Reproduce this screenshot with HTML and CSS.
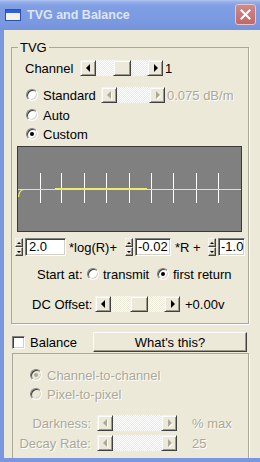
FILE: index.html
```html
<!DOCTYPE html>
<html>
<head>
<meta charset="utf-8">
<link rel="stylesheet" href="styles.css">
</head>
<body>
<div class="window">
  <div class="titlebar">
    <svg class="app-icon" width="16" height="12" viewBox="0 0 16 12">
      <rect x="0.5" y="0.5" width="15" height="11" fill="#F4F2E8" stroke="#2A50B0"/>
      <rect x="1" y="1" width="14" height="3" fill="#2F62D8"/>
    </svg>
    <span class="title">TVG and Balance</span>
    <span class="close">
      <svg width="11" height="11" viewBox="0 0 11 11"><path d="M1.5 1.5 L9.5 9.5 M9.5 1.5 L1.5 9.5" stroke="#fff" stroke-width="2" stroke-linecap="square"/></svg>
    </span>
  </div>
  <div class="main">
    <fieldset class="group tvg">
      <legend>TVG</legend>
      <div class="row channel-row">
        <span class="lbl channel-lbl">Channel</span>
        <div class="hscroll sb-channel">
          <span class="sb-btn"><i class="arr-left"></i></span>
          <span class="sb-track"><span class="sb-thumb thumb-channel"></span></span>
          <span class="sb-btn"><i class="arr-right"></i></span>
        </div>
        <span class="val-after">1</span>
      </div>
      <div class="row radio-row std-row">
        <span class="radio"></span>
        <span class="radio-lbl std-lbl">Standard</span>
        <div class="hscroll sb-std disabled">
          <span class="sb-btn"><i class="arr-left"></i></span>
          <span class="sb-track"></span>
          <span class="sb-btn"><i class="arr-right"></i></span>
        </div>
        <span class="val-after dis">0.075 dB/m</span>
      </div>
      <div class="row radio-row">
        <span class="radio"></span>
        <span class="radio-lbl">Auto</span>
      </div>
      <div class="row radio-row custom-row">
        <span class="radio on"></span>
        <span class="radio-lbl">Custom</span>
      </div>
      <div class="graph">
        <svg width="223" height="84" viewBox="0 0 223 84">
          <rect width="223" height="84" fill="#808080"/>
          <g stroke="#fff" stroke-width="1">
            <line x1="22.5" y1="26" x2="22.5" y2="56"/>
            <line x1="43.5" y1="26" x2="43.5" y2="56"/>
            <line x1="66.5" y1="26" x2="66.5" y2="56"/>
            <line x1="88.5" y1="26" x2="88.5" y2="56"/>
            <line x1="111.5" y1="26" x2="111.5" y2="56"/>
            <line x1="133.5" y1="26" x2="133.5" y2="56"/>
            <line x1="155.5" y1="26" x2="155.5" y2="56"/>
            <line x1="178.5" y1="26" x2="178.5" y2="56"/>
            <line x1="200.5" y1="26" x2="200.5" y2="56"/>
          </g>
          <path d="M0 42.5 H223" stroke="#EDED60" stroke-width="1" fill="none"/>
          <path d="M37 41.5 H129" stroke="#EDED70" stroke-width="1" fill="none"/>
          <path d="M0.5 50 Q1 43 6 42.5" stroke="#EDED60" stroke-width="1.2" fill="none"/>
        </svg>
      </div>
      <div class="row coef-row">
        <span class="spin"><span class="spin-btn"><i class="arr-up"></i></span><span class="spin-btn"><i class="arr-down"></i></span></span>
        <span class="edit e1">2.0</span>
        <span class="coef-txt t1">*log(R)+</span>
        <span class="spin"><span class="spin-btn"><i class="arr-up"></i></span><span class="spin-btn"><i class="arr-down"></i></span></span>
        <span class="edit e2">-0.02</span>
        <span class="coef-txt t2">*R +</span>
        <span class="spin"><span class="spin-btn"><i class="arr-up"></i></span><span class="spin-btn"><i class="arr-down"></i></span></span>
        <span class="edit e3">-1.0</span>
      </div>
      <div class="row start-row">
        <span class="start-lbl">Start at:</span>
        <span class="radio"></span>
        <span class="radio-lbl transmit-lbl">transmit</span>
        <span class="radio on"></span>
        <span class="radio-lbl">first return</span>
      </div>
      <div class="row dc-row">
        <span class="dc-lbl">DC Offset:</span>
        <div class="hscroll sb-dc">
          <span class="sb-btn"><i class="arr-left"></i></span>
          <span class="sb-track"><span class="sb-thumb thumb-dc"></span></span>
          <span class="sb-btn"><i class="arr-right"></i></span>
        </div>
        <span class="val-after dc-val">+0.00v</span>
      </div>
    </fieldset>
    <div class="balance-row">
      <span class="checkbox"></span>
      <span class="balance-lbl">Balance</span>
      <span class="button">What's this?</span>
    </div>
    <fieldset class="group balance-group">
      <div class="row bradio-row first">
        <span class="radio dis on"></span>
        <span class="radio-lbl dis">Channel-to-channel</span>
      </div>
      <div class="row bradio-row">
        <span class="radio dis"></span>
        <span class="radio-lbl dis">Pixel-to-pixel</span>
      </div>
      <div class="row slider-row dark-row">
        <span class="slider-lbl dis">Darkness:</span>
        <div class="hscroll sb-bal disabled">
          <span class="sb-btn"><i class="arr-left"></i></span>
          <span class="sb-track"></span>
          <span class="sb-btn"><i class="arr-right"></i></span>
        </div>
        <span class="slider-val dis">% max</span>
      </div>
      <div class="row slider-row decay-row">
        <span class="slider-lbl dis">Decay Rate:</span>
        <div class="hscroll sb-bal disabled">
          <span class="sb-btn"><i class="arr-left"></i></span>
          <span class="sb-track"></span>
          <span class="sb-btn"><i class="arr-right"></i></span>
        </div>
        <span class="slider-val dis">25</span>
      </div>
    </fieldset>
  </div>
</div>
</body>
</html>
```
FILE: styles.css
```css
* { box-sizing: border-box; }
html, body { margin: 0; padding: 0; }
body {
  width: 260px; height: 462px; overflow: hidden;
  font-family: "Liberation Sans", Arial, sans-serif;
  font-size: 13px; color: #000; background: #ECE9D8;
}
.window { width: 260px; height: 462px; display: flex; flex-direction: column; }

/* title bar */
.titlebar {
  height: 30px; flex: none; display: flex; align-items: center;
  padding: 0 4px 1px 5px;
  background: linear-gradient(#B0C6F0 0, #94AEEA 2px, #809EE3 6px, #7B99E1 22px, #7593DC 30px);
}
.app-icon { flex: none; margin-right: 6px; margin-top: 1px; }
.title { flex: 1; font-weight: bold; font-size: 12.5px; color: #DCE6F8; }
.close {
  width: 21px; height: 21px; flex: none; margin-bottom: 1px;
  border: 1px solid #E6C6C6; border-radius: 3px;
  background: linear-gradient(#D08A8A, #C06868);
  display: flex; align-items: center; justify-content: center;
}

.main {
  flex: 1; min-height: 0; overflow: hidden;
  border-left: 4px solid #7A96DF; border-bottom: 4px solid #7A96DF;
  background: #ECE9D8;
  display: flex; flex-direction: column;
}

/* group boxes */
.group {
  margin: 0; padding: 0; min-width: 0;
  border: 1px solid #ACA899;
  box-shadow: 1px 1px 0 #fff;
}
.group legend { margin-left: 6px; padding: 0 2px; line-height: 15px; font-size: 13px; }
.tvg { margin: 10px 11px 0 7px; padding-bottom: 10px; flex: none; }
.balance-group { margin: 1px 11px 0 8px; height: 120px; flex: none; }

.row { display: flex; align-items: center; height: 18px; white-space: nowrap; }

/* TVG rows */
.channel-row { margin-top: 4px; padding-left: 13px; }
.channel-lbl { width: 55px; }
.val-after { margin-left: 2px; }
.radio-row { padding-left: 14px; height: 20px; }
.std-row { margin-top: 8px; }
.custom-row { height: 18px; }
.radio-lbl { margin-left: 5px; }
.std-lbl { width: 56px; }

.graph {
  margin: 3px 0 0 5px; width: 225px; height: 86px;
  border: 1px solid #3A3A3A;
}
.graph svg { display: block; }

.coef-row { margin-top: 6px; padding-left: 3px; }
.edit {
  height: 18px; margin-left: 2px; padding: 0 0 0 3px;
  background: #fff; line-height: 16px;
  border: 1px solid; border-color: #808080 #fff #fff #808080;
  box-shadow: inset 1px 1px #404040, inset -1px -1px #D4D0C8;
}
.e1 { width: 41px; }
.e2 { width: 36px; padding-left: 2px; }
.e3 { width: 27px; padding-left: 2px; }
.coef-txt { margin-left: 3px; }
.t1 { width: 56px; }
.t2 { width: 33px; margin-left: 4px; }

.spin { width: 8px; height: 18px; display: flex; flex-direction: column; flex: none; }
.spin-btn {
  flex: 1; display: flex; align-items: center; justify-content: center;
  background: #ECE9D8;
  border: 1px solid; border-color: #F5F4EE #404040 #404040 #F5F4EE;
  box-shadow: inset -1px -1px #9D9A8C;
}
.arr-up { width: 0; height: 0; border-left: 2px solid transparent; border-right: 2px solid transparent; border-bottom: 2px solid #000; }
.arr-down { width: 0; height: 0; border-left: 2px solid transparent; border-right: 2px solid transparent; border-top: 2px solid #000; }

.start-row { margin-top: 9px; padding-left: 25px; }
.start-lbl { width: 50px; }
.transmit-lbl { width: 54px; margin-left: 4px; }
.start-row .radio-lbl { margin-left: 4px; }

.dc-row { margin-top: 12px; padding-left: 20px; }
.dc-lbl { width: 63px; }
.dc-val { margin-left: 5px; }

/* radio + checkbox */
.radio {
  width: 12px; height: 12px; border-radius: 50%; flex: none;
  background: #fff;
  border: 1px solid; border-color: #808080 #fff #fff #808080;
  box-shadow: inset 1px 1px #404040, inset -1px -1px #D4D0C8;
  display: flex; align-items: center; justify-content: center;
}
.radio.on::after { content: ""; width: 4px; height: 4px; border-radius: 50%; background: #000; }
.radio.dis { background: #ECE9D8; }
.radio.dis.on::after { background: #ACA899; }

.checkbox {
  width: 13px; height: 13px; flex: none; background: #fff;
  border: 1px solid; border-color: #808080 #fff #fff #808080;
  box-shadow: inset 1px 1px #404040, inset -1px -1px #D4D0C8;
}

/* scrollbars */
.hscroll { display: flex; height: 16px; flex: none; }
.sb-channel { width: 83px; }
.sb-std { width: 64px; margin-left: 2px; }
.sb-dc { width: 85px; }
.sb-bal { width: 80px; margin-left: 6px; }
.sb-btn {
  width: 16px; height: 16px; flex: none;
  display: flex; align-items: center; justify-content: center;
  background: #ECE9D8;
  border: 1px solid; border-color: #F3F2EC #404040 #404040 #F3F2EC;
  box-shadow: inset 1px 1px #fff, inset -1px -1px #9D9A8C;
}
.sb-track {
  flex: 1; display: flex;
  background: repeating-conic-gradient(#ECE9D8 0 25%, #fff 0 50%) 0 0 / 2px 2px;
}
.sb-thumb {
  width: 18px; height: 16px;
  background: #ECE9D8;
  border: 1px solid; border-color: #F3F2EC #404040 #404040 #F3F2EC;
  box-shadow: inset 1px 1px #fff, inset -1px -1px #9D9A8C;
}
.thumb-channel { margin-left: 17px; }
.thumb-dc { margin-left: 19px; }
.arr-left { width: 0; height: 0; border-top: 4px solid transparent; border-bottom: 4px solid transparent; border-right: 4px solid #000; margin-right: 1px; }
.arr-right { width: 0; height: 0; border-top: 4px solid transparent; border-bottom: 4px solid transparent; border-left: 4px solid #000; margin-left: 1px; }
.disabled .arr-left { border-right-color: #ACA899; filter: drop-shadow(1px 1px 0 #fff); }
.disabled .arr-right { border-left-color: #ACA899; filter: drop-shadow(1px 1px 0 #fff); }

/* balance */
.balance-row { display: flex; align-items: center; height: 20px; margin-top: 8px; padding-left: 8px; flex: none; }
.balance-lbl { width: 63px; margin-left: 5px; }
.button {
  width: 154px; height: 20px; display: flex; align-items: center; justify-content: center;
  background: #ECE9D8;
  border: 1px solid; border-color: #fff #404040 #404040 #fff;
  box-shadow: inset -1px -1px #9D9A8C;
}

.dis { color: #ACA899; text-shadow: 1px 1px 0 #fff; }
.bradio-row { padding-left: 17px; margin-top: 1px; }
.bradio-row.first { margin-top: 12px; }
.slider-row { padding-left: 0; }
.dark-row { margin-top: 11px; }
.decay-row { margin-top: 2px; }
.slider-lbl { width: 78px; text-align: right; }
.slider-val { margin-left: 15px; }
```
